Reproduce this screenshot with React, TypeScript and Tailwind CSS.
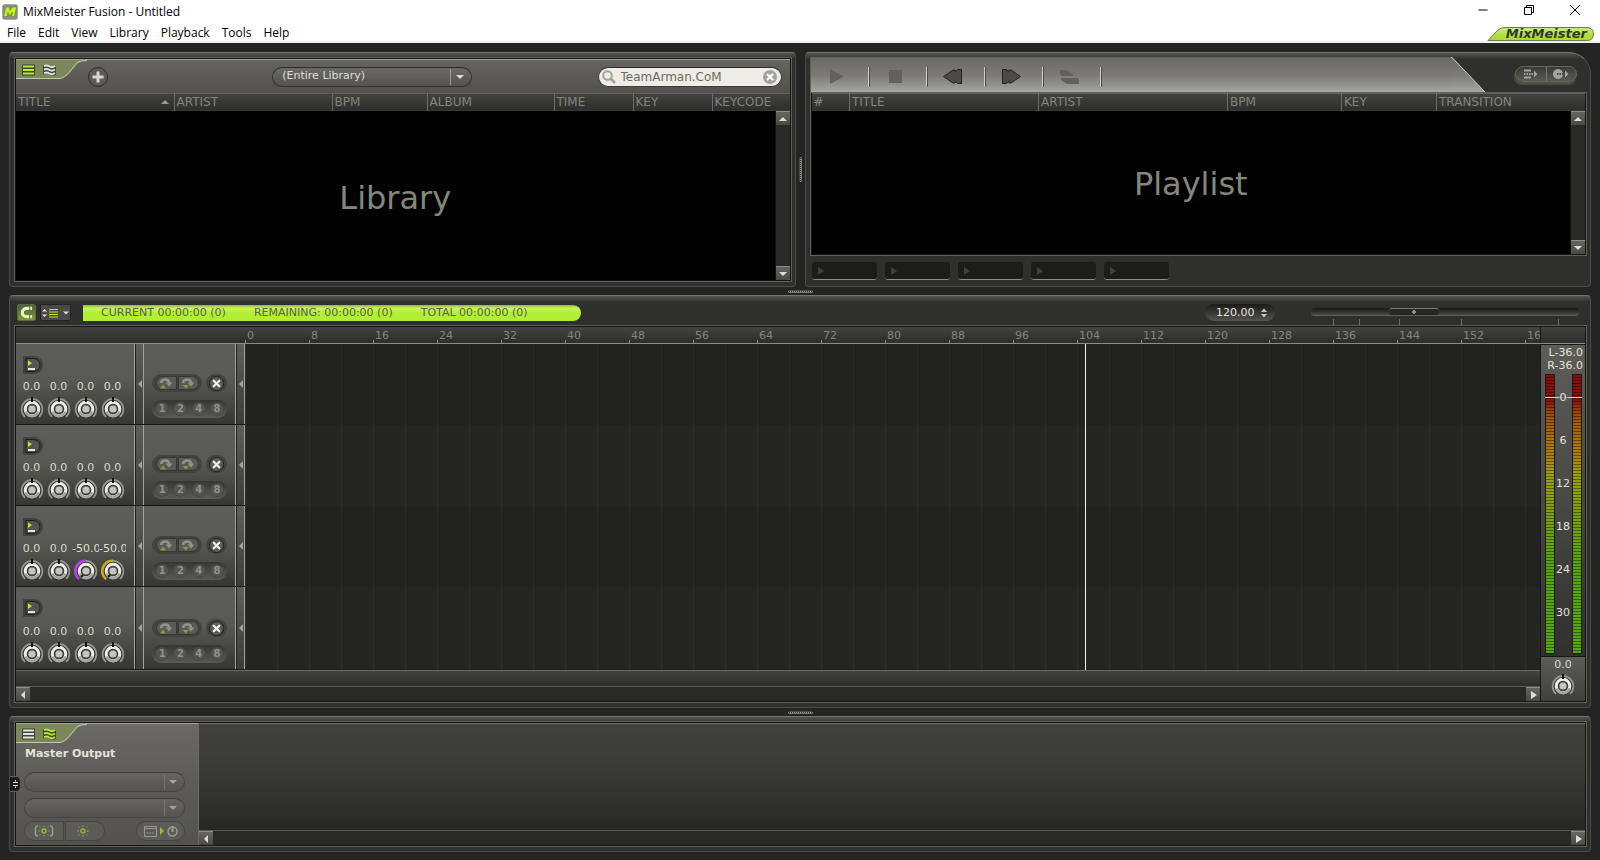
import React, { useState } from "react";
import { Minus, X } from "lucide-react";

const libraryColumns = [
  { label: "TITLE", width: "w-[158px]", sorted: true },
  { label: "ARTIST", width: "w-[158px]" },
  { label: "BPM", width: "w-[95px]" },
  { label: "ALBUM", width: "w-[127px]" },
  { label: "TIME", width: "w-[79px]" },
  { label: "KEY", width: "w-[79px]" },
  { label: "KEYCODE", width: "w-auto" },
];

const playlistColumns = [
  { label: "#", width: "w-[38px]" },
  { label: "TITLE", width: "w-[189px]" },
  { label: "ARTIST", width: "w-[189px]" },
  { label: "BPM", width: "w-[114px]" },
  { label: "KEY", width: "w-[95px]" },
  { label: "TRANSITION", width: "w-auto" },
];

const tracks = [
  { id: 1, values: ["0.0", "0.0", "0.0", "0.0"] },
  { id: 2, values: ["0.0", "0.0", "0.0", "0.0"] },
  { id: 3, values: ["0.0", "0.0", "-50.0", "-50.0"] },
  { id: 4, values: ["0.0", "0.0", "0.0", "0.0"] },
];

const knobNames = ["Volume", "Bass", "Mid", "Treble"];
const arcColors = ["", "", "#b93cf0", "#c9ab0c"];
const beats = Array.from({ length: 21 }, (_, i) => i * 8);
const menuItems = ["File", "Edit", "View", "Library", "Playback", "Tools", "Help"];

type Column = { label: string; width: string; sorted?: boolean };
type Direction = "up" | "down" | "left" | "right";

const arrowPaths: Record<Direction, string> = {
  up: "M0 6 L4 2 L8 6 Z",
  down: "M0 2 L8 2 L4 6 Z",
  left: "M6 0 L6 8 L2 4 Z",
  right: "M2 0 L8 4 L2 8 Z",
};

const Arrow = ({ dir, className = "text-[#deded8]" }: { dir: Direction; className?: string }) => (
  <svg viewBox="0 0 8 8" className={`h-2 w-2 shrink-0 fill-current ${className}`} aria-hidden="true">
    <path d={arrowPaths[dir]} />
  </svg>
);

const ScrollButton = ({ dir }: { dir: Direction }) => (
  <button
    aria-label={`Scroll ${dir}`}
    className="flex h-[14px] w-[14px] shrink-0 items-center justify-center border-t border-[#8d8d88] bg-linear-to-b from-[#66655f] to-[#4a4946]"
  >
    <Arrow dir={dir} />
  </button>
);

const VerticalScroll = () => (
  <div className="flex w-[15px] flex-col items-end justify-between border-l border-[#111110] bg-[#292927]">
    <ScrollButton dir="up" />
    <ScrollButton dir="down" />
  </div>
);

const HorizontalScroll = () => (
  <div className="flex h-[14px] items-center justify-between bg-[#292927]">
    <ScrollButton dir="left" />
    <ScrollButton dir="right" />
  </div>
);

const ColumnHeads = ({ columns }: { columns: Column[] }) => (
  <table className="h-[18px] w-full table-fixed border-collapse bg-linear-to-b from-[#42423f] to-[#2d2d2b] text-[12px] leading-[14px] text-[#83857a]">
    <thead>
      <tr className="border-t border-[#62625e]">
        {columns.map((col, i) => (
          <th
            key={col.label}
            scope="col"
            className={`${col.width} p-0 pb-[2px] pl-[2px] text-left align-middle font-normal ${i > 0 ? "border-l border-[#6c6c68]" : ""}`}
          >
            <span className="flex items-center justify-between">
              {col.label}
              {col.sorted && <Arrow dir="up" className="mr-[5px] text-[#9a9a92]" />}
            </span>
          </th>
        ))}
      </tr>
    </thead>
  </table>
);

const ViewTabs = ({ active }: { active: "list" | "wave" }) => (
  <div className="relative h-5 w-[84px] shrink-0">
    <svg viewBox="0 0 84 20" className="absolute inset-0 h-5 w-[84px]" aria-hidden="true">
      <path d="M0 0 H68 C61 1 54 18 45 18.500 H0 Z" fill="#7c875c" />
      <path d="M0 18.500 H43 C51 18.500 56 7 62 2 Q65 0.500 71 0.500" fill="none" stroke="#c4c6b4" strokeWidth="1" />
    </svg>
    <div className="relative flex gap-2 pt-1 pl-[6px]">
      <button aria-label="List view">
        <svg viewBox="0 0 13 12" className={`h-3 w-[13px] ${active === "list" ? "stroke-[#b5ea2e]" : "stroke-[#e3e3e0]"}`}>
          <rect x="0" y="0.5" width="13" height="11" fill="#3f4136" stroke="none" />
          <path d="M1 2.5 H12 M1 6 H12 M1 9.5 H12" strokeWidth="2" />
        </svg>
      </button>
      <button aria-label="Wave view">
        <svg viewBox="0 0 13 12" className={`h-3 w-[13px] ${active === "wave" ? "stroke-[#b5ea2e]" : "stroke-[#e3e3e0]"}`} fill="none">
          <path d="M0 1.500 Q3 0 6.500 2 T13 2 V11 Q9 12 6.500 10.500 T0 10.500 Z" fill="#3f4136" stroke="none" />
          <path d="M1 2 Q4 1 6.500 2.500 T12 2 M1 5.500 Q4 4.500 6.500 6 T12 5.500 M1 9 Q4 8 6.500 9.500 T12 9" strokeWidth="2" />
        </svg>
      </button>
    </div>
  </div>
);

const Knob = ({ label, arc }: { label: string; arc?: string }) => (
  <button aria-label={label} className="h-[22px] w-6">
    <svg viewBox="0 0 24 22" className="h-[22px] w-6" fill="none">
      <circle cx="12" cy="12" r="9" fill="#33332f" />
      <path d="M5 20 A10.400 10.400 0 1 1 19 20" stroke="#97988d" strokeWidth="1.600" />
      <circle cx="12" cy="12" r="6.800" stroke="#ececea" strokeWidth="3" />
      <path d="M5.500 14.500 A7 7 0 0 0 18.500 14.500" stroke="#a5a5a1" strokeWidth="3" />
      <circle cx="12" cy="12" r="4.800" fill="#454542" />
      <circle cx="12" cy="12" r="3.600" fill="#c4c4c0" />
      {arc ? (
        <>
          <path d="M5 20 A10.400 10.400 0 0 1 12 1.600" stroke={arc} strokeWidth="2.400" />
          <path d="M7 18 L9 16" stroke="#111" strokeWidth="2" />
        </>
      ) : (
        <path d="M12 0 V5" stroke="#151513" strokeWidth="2" />
      )}
    </svg>
  </button>
);

const CollapseStrip = () => (
  <button
    aria-label="Collapse section"
    className="flex w-[9px] items-center justify-center border-r border-l border-[#22221f] border-r-[#a3a39b] bg-linear-to-b from-[#5d5d59] to-[#3c3c39]"
  >
    <Arrow dir="left" className="text-[#a3a39b]" />
  </button>
);

const LoopIcon = ({ dir }: { dir: Direction }) => (
  <svg viewBox="0 0 14 12" className="h-3 w-[14px]" fill="none">
    <path d="M2 6 Q2.500 2.500 6.500 2.500 Q10 2.500 10 6" stroke="#92928b" strokeWidth="2.600" />
    <path d="M6.500 5.500 H13.500 L10 9.500 Z" fill="#92928b" />
    <path d={dir === "up" ? "M1 11.500 L4 7.500 L7 11.500 Z" : "M1.500 8 H8 L4.750 11.500 Z"} fill="#7fa03c" />
  </svg>
);

const TrackControls = ({ values, last }: { values: string[]; last: boolean }) => (
  <div
    className={`flex border-b border-[#161614] bg-linear-to-b from-[#5d5d59] via-[#595955] via-45% to-[#363634] ${last ? "h-[83px]" : "h-[81px]"}`}
  >
    <div className="flex w-[119px] flex-col border-r border-[#a3a39b] pt-3 pb-[5px] pl-[2px]">
      <button aria-label="Mute track" className="ml-[5px] flex h-[18px] w-[20px] items-center justify-center rounded-r-full bg-[#41413e]">
        <svg viewBox="0 0 16 14" className="h-[14px] w-4">
          <path d="M1 0.500 H8 Q15 1 15 7 Q15 13 8 13.500 H1 Z" fill="#55554f" stroke="#1c1c1a" />
          <path d="M3 2.500 L7 5 L3 8 Z" fill="#b5ee2e" />
          <path d="M3 11 H10" stroke="#e8e8df" strokeWidth="2" />
        </svg>
      </button>
      <div className="mt-auto grid w-[108px] grid-cols-4 text-center text-[11px] leading-[14px] text-[#dcdccb]">
        {values.map((v, i) => (
          <span key={i} className="overflow-hidden whitespace-nowrap">{v}</span>
        ))}
      </div>
      <div className="mt-[3px] grid w-[108px] grid-cols-4 justify-items-center">
        {values.map((v, i) => (
          <Knob key={i} label={knobNames[i]} arc={v === "0.0" ? undefined : arcColors[i]} />
        ))}
      </div>
    </div>
    <CollapseStrip />
    <div className="flex w-[92px] flex-col justify-end gap-2 border-r border-[#a3a39b] pb-[6px] pl-2">
      <div className="flex gap-1">
        <div className="flex h-[18px] w-[50px] items-center justify-center gap-px rounded-full bg-[#42423f]">
          <button aria-label="Loop start" className="flex h-[14px] w-[21px] items-center justify-center rounded-l-full border border-[#363633] bg-[#5a5a55]">
            <LoopIcon dir="up" />
          </button>
          <button aria-label="Loop end" className="flex h-[14px] w-[21px] items-center justify-center rounded-r-full border border-[#363633] bg-[#5a5a55]">
            <LoopIcon dir="down" />
          </button>
        </div>
        <div className="flex h-[18px] w-[21px] items-center justify-center rounded-full bg-[#42423f]">
          <button aria-label="Clear loop" className="flex h-[15px] w-[15px] items-center justify-center rounded-full border border-[#1d1d1b] bg-[#5c5c56]">
            <X className="h-[11px] w-[11px] text-[#f0f0ea]" strokeWidth={5} />
          </button>
        </div>
      </div>
      <div className="flex h-[18px] w-[75px] items-center justify-around rounded-full bg-linear-to-b from-[#363634] to-[#5a5a56] px-px text-[10px] leading-[14px] font-bold text-[#91918a]">
        {[1, 2, 4, 8].map((n) => (
          <button key={n} className="h-[14px] w-[14px] rounded-full border border-[#474744] bg-[#53534f] leading-3">{n}</button>
        ))}
      </div>
    </div>
    <CollapseStrip />
  </div>
);

const MeterBar = () => (
  <div className="h-[280px] w-[10px] border border-[#1a1a18] bg-[repeating-linear-gradient(to_bottom,transparent_0px,transparent_2px,#00000066_2px,#00000066_3px),linear-gradient(to_bottom,#8b0c08_0%,#80140a_9%,#943c06_12%,#a35506_16%,#ac6c08_22%,#ab8410_30%,#9da010_36%,#78a010_52%,#57a510_66%,#55a812_100%)]" />
);

const LevelMeter = () => (
  <div className="flex w-[45px] flex-col border-t border-l border-[#171715]">
    <div className="flex flex-1 flex-col items-center border-b border-[#171715] bg-linear-to-b from-[#5c5c58] via-[#484845] to-[#30302e] pt-px text-[11px] leading-[13px] text-[#e4e4d4]">
      <p className="self-end pr-[2px] whitespace-nowrap">L-36.0</p>
      <p className="self-end pr-[2px] whitespace-nowrap">R-36.0</p>
      <div className="relative mt-[2px] flex gap-[17px]">
        <MeterBar />
        <div className="absolute inset-x-0 top-[23px] h-px bg-linear-to-r from-[#dce86a] from-35% via-transparent via-50% to-[#dce86a] to-65%" />
        <div className="absolute inset-x-0 top-[17px] flex flex-col items-center gap-[30px]">
          {[0, 6, 12, 18, 24, 30].map((n) => (
            <span key={n}>{n}</span>
          ))}
        </div>
        <MeterBar />
      </div>
    </div>
    <div className="flex h-[44px] flex-col items-center bg-linear-to-b from-[#5d5d59] to-[#3f3f3c] pt-px text-[11px] leading-[14px] text-[#dcdccb]">
      <span>0.0</span>
      <div className="mt-[2px]">
        <Knob label="Master volume" />
      </div>
    </div>
  </div>
);

const HorizontalGrip = () => (
  <div className="flex h-2 items-center justify-center">
    <div className="h-[3px] w-[25px] rounded-full border-y border-[#4a4a45] border-b-[#77776f] bg-[repeating-linear-gradient(to_right,#9c9c94_0px,#9c9c94_1px,#333330_1px,#333330_2px)]" />
  </div>
);

const panel =
  "rounded-[4px] border border-[#4b4b48] border-t-[#74736d] bg-[#2f2f2d] bg-[linear-gradient(to_bottom,#55544f_0px,#2f2f2d_6px)] p-1 pr-[3px]";
const inner = "flex flex-col border border-[#5f5f5b] bg-[#141412] p-px";

const LibraryPanel = () => {
  const [query, setQuery] = useState("TeamArman.CoM");
  return (
    <section className={`${panel} flex min-w-0 flex-1 flex-col`}>
      <div className={`${inner} flex-1`}>
        <div className="flex h-[34px] items-center justify-between border-t border-[#a3a29c] bg-linear-to-b from-[#65645e] to-[#52514d] pr-2">
          <div className="flex w-[92px] items-center self-stretch">
            <div className="self-start">
              <ViewTabs active="list" />
            </div>
            <button
              aria-label="Add"
              className="-ml-[12px] flex h-5 w-5 shrink-0 items-center justify-center rounded-full border border-[#2d2d2a] bg-[#5c5b56]"
            >
              <svg viewBox="0 0 12 12" className="h-3 w-3" stroke="#d8d8d2" strokeWidth="3">
                <path d="M6 0.500 V11.500 M0.500 6 H11.500" />
              </svg>
            </button>
          </div>
          <div className="relative ml-[39px] flex h-5 w-[200px] items-center">
            <select
              aria-label="Collection"
              className="h-5 w-full appearance-none rounded-full border border-[#32322f] border-t-[#2b2b29] bg-linear-to-b from-[#6b6a64] to-[#54534f] pl-[9px] text-[11px] text-[#deded6]"
            >
              <option>(Entire Library)</option>
            </select>
            <span className="pointer-events-none absolute top-[2px] right-[21px] h-4 w-px bg-[#9a9a93]" />
            <Arrow dir="down" className="pointer-events-none absolute right-2 text-[#deded8]" />
          </div>
          <div className="flex h-5 w-[184px] items-center rounded-full border border-[#3a3a37] border-t-[#2b2b29] bg-[#edece5] pr-1 pl-[3px]">
            <svg viewBox="0 0 14 14" className="h-[14px] w-[14px] shrink-0" fill="none" stroke="#a2a29c">
              <circle cx="5.500" cy="5.500" r="4.300" strokeWidth="2" />
              <path d="M8.500 8.500 L13 13" strokeWidth="2.500" />
            </svg>
            <input
              aria-label="Search library"
              value={query}
              onChange={(e) => setQuery(e.target.value)}
              className="ml-[5px] h-4 min-w-0 flex-1 bg-transparent text-[12px] leading-4 text-[#6c6b62] outline-none"
            />
            <button
              aria-label="Clear search"
              onClick={() => setQuery("")}
              className="flex h-[14px] w-[14px] items-center justify-center rounded-full bg-[#a2a29c]"
            >
              <X className="h-[10px] w-[10px] text-white" strokeWidth={5} />
            </button>
          </div>
        </div>
        <ColumnHeads columns={libraryColumns} />
        <div className="flex flex-1 bg-black">
          <div className="flex flex-1 items-center justify-center pt-[5px] text-[32px] leading-10 text-[#85877b]">Library</div>
          <VerticalScroll />
        </div>
      </div>
    </section>
  );
};

const toolbarIcons = [
  { name: "Play", icon: <path d="M4 1 L18 8.500 L4 16 Z" fill="#62615c" /> },
  { name: "Stop", icon: <path d="M5 2 H18 V15 H5 Z" fill="#62615c" /> },
  {
    name: "Previous",
    icon: (
      <path d="M1.500 8.500 L11 2 H13 V3.500 L16 1.500 H19.500 V15.500 H16 L13 13.500 V15 H11 Z" fill="#4b4a46" stroke="#22221f" />
    ),
  },
  {
    name: "Next",
    icon: (
      <path d="M20.500 8.500 L11 2 H9 V3.500 L6 1.500 H2.500 V15.500 H6 L9 13.500 V15 H11 Z" fill="#4b4a46" stroke="#22221f" />
    ),
  },
  {
    name: "Swap",
    icon: <path d="M2 2 H8 L15 6 V8 H4 L2 6 Z M3 10 H19 Q21 10 21 12 V16 H9 L3 12 Z" fill="#62615c" />,
  },
];

const PlaylistPanel = () => (
  <section className={`${panel} flex min-w-0 flex-1 flex-col rounded-tr-[22px]`}>
    <div className="flex h-[35px]">
      <div className="flex min-w-0 flex-1">
        <div className="flex min-w-0 flex-1 items-center border-t border-l border-[#5f5f5b] bg-linear-to-b from-[#6a6963] via-[#7b7a75] to-[#a6a5a1] pt-[3px]">
          {toolbarIcons.map(({ name, icon }) => (
            <button
              key={name}
              aria-label={name}
              className="flex h-5 w-[58px] items-center justify-center border-r border-[#d2d2ce] pr-1 shadow-[1px_0_0_#4a4a46]"
            >
              <svg viewBox="0 0 22 18" className="h-[18px] w-[22px]">{icon}</svg>
            </button>
          ))}
        </div>
        <svg viewBox="0 0 34 35" className="h-[35px] w-[34px] shrink-0" aria-hidden="true">
          <defs>
            <linearGradient id="steel" x1="0" y1="0" x2="0" y2="1">
              <stop offset="0" stopColor="#6a6963" />
              <stop offset="0.5" stopColor="#7b7a75" />
              <stop offset="1" stopColor="#a6a5a1" />
            </linearGradient>
          </defs>
          <path d="M0 0 H1 L34 35 H0 Z" fill="url(#steel)" />
          <path d="M0 0.500 H1 L34 35" fill="none" stroke="#c9c9c4" />
        </svg>
      </div>
      <div className="flex w-[102px] items-start justify-center pt-[9px] pl-[20px]">
        <div className="flex h-4 w-[62px] items-center rounded-full border border-[#66684f] bg-linear-to-b from-[#3a3a37] to-[#5a5a55] shadow-[-1px_3px_2px_#50504c]">
          <button aria-label="Send to playlist" className="flex h-full flex-1 items-center justify-center border-r border-[#77776f]">
            <svg viewBox="0 0 14 10" className="h-[10px] w-[14px]" stroke="#a4a49d" strokeWidth="2">
              <path d="M0 1.500 H7 M0 8.500 H7" />
              <path d="M0 5 H10" strokeDasharray="1.500 1" />
              <path d="M10 1.500 L13.500 5 L10 8.500 Z" fill="#a4a49d" stroke="none" />
            </svg>
          </button>
          <button aria-label="Record" className="flex h-full flex-1 items-center justify-center">
            <svg viewBox="0 0 16 10" className="h-[10px] w-4">
              <circle cx="5" cy="5" r="5" fill="#a4a49d" />
              <path d="M4 5 H12" stroke="#4a4a46" strokeWidth="2" strokeDasharray="1.500 1" />
              <path d="M12 1.500 L15.500 5 L12 8.500 Z" fill="#a4a49d" />
            </svg>
          </button>
        </div>
      </div>
    </div>
    <div className={`${inner} min-h-0 flex-1 pt-0`}>
      <ColumnHeads columns={playlistColumns} />
      <div className="flex flex-1 bg-black">
        <div className="flex flex-1 items-center justify-center pt-[3px] text-[32px] leading-10 text-[#85877b]">Playlist</div>
        <VerticalScroll />
      </div>
    </div>
    <div className="flex gap-2 pt-[6px] pb-[2px] pl-[2px]">
      {[1, 2, 3, 4, 5].map((n) => (
        <button
          key={n}
          aria-label={`Preset ${n}`}
          className="flex h-[18px] w-[65px] items-center rounded-[3px] border-b border-[#8e8e88] bg-[#1c1c1a] pl-1"
        >
          <Arrow dir="right" className="text-[#40403d]" />
        </button>
      ))}
    </div>
  </section>
);

const zoomTicks = ["w-[26px]", "w-[40px]", "w-[62px]", "w-[97px]", "w-px"];

const Timeline = () => (
  <section className={`${panel} flex flex-col`}>
    <div className="flex h-[25px] items-center justify-between">
      <div className="flex items-center pl-[3px]">
        <button
          aria-label="Snap to grid"
          className="flex h-[17px] w-[19px] items-center justify-center rounded-[2px] border border-[#5b6a36] bg-linear-to-b from-[#55584a] to-[#7b9c32]"
        >
          <svg viewBox="0 0 14 14" className="h-[13px] w-[13px]" fill="none">
            <path d="M13 2.500 H7 A4.500 4.500 0 0 0 7 11.500 H13" stroke="#e3f7b4" strokeWidth="3.500" />
            <path d="M10.500 0.500 V5 M10.500 9 V14" stroke="#4c5a2c" />
          </svg>
        </button>
        <button
          aria-label="Track view options"
          className="ml-1 flex h-[17px] w-[31px] items-center justify-center gap-[2px] rounded-[2px] border border-[#232321] bg-[#4a4946]"
        >
          <svg viewBox="0 0 5 10" className="h-[10px] w-[5px] fill-[#deded8]">
            <path d="M0 3.500 L2.500 1 L5 3.500 Z M0 6.500 H5 L2.500 9 Z" />
          </svg>
          <svg viewBox="0 0 9 10" className="h-[10px] w-[9px] stroke-[#b5ea2e]">
            <path d="M0 1.500 H9 M0 4 H9 M0 6.500 H9 M0 9 H9" />
          </svg>
          <svg viewBox="0 0 6 4" className="ml-[3px] h-1 w-[6px] fill-[#deded8]">
            <path d="M0 0.500 H6 L3 3.500 Z" />
          </svg>
        </button>
        <div className="ml-3 flex h-4 w-[498px] items-center gap-7 rounded-r-full bg-linear-to-b from-[#8fb83c] via-[#c9f55c] via-20% to-[#b2ee34] to-50% pl-[18px] text-[11px] leading-[14px] text-[#5c5f48]">
          <span>CURRENT 00:00:00 (0)</span>
          <span>REMAINING: 00:00:00 (0)</span>
          <span>TOTAL 00:00:00 (0)</span>
        </div>
      </div>
      <div className="flex items-start gap-9 self-start pr-2">
        <div className="mt-1 flex h-[17px] w-[70px] items-center rounded-full bg-linear-to-b from-[#1b1b19] to-[#55544f] px-[11px]">
          <input
            aria-label="Tempo"
            defaultValue="120.00"
            className="h-4 w-[45px] bg-transparent text-[11px] leading-4 text-[#e4e4dc] outline-none"
          />
          <svg viewBox="0 0 6 10" className="h-[10px] w-[6px] shrink-0 fill-[#c8c8c2]">
            <path d="M0 4 L3 0.500 L6 4 Z M0 6 H6 L3 9.500 Z" />
          </svg>
        </div>
        <div className="flex w-[268px] flex-col pt-2">
          <input
            type="range"
            aria-label="Timeline zoom"
            defaultValue={36}
            className="h-2 w-full appearance-none rounded-full border-b border-[#5d5d59] bg-linear-to-b from-[#181816] to-[#494946] [&::-webkit-slider-thumb]:h-[7px] [&::-webkit-slider-thumb]:w-[50px] [&::-webkit-slider-thumb]:appearance-none [&::-webkit-slider-thumb]:rounded-[3px] [&::-webkit-slider-thumb]:border-t [&::-webkit-slider-thumb]:border-[#77776f] [&::-webkit-slider-thumb]:bg-[radial-gradient(circle,#8f8f88_0px,#8f8f88_2px,#262624_2px)]"
          />
          <div className="mt-[3px] flex h-[6px] pl-[22px]">
            {zoomTicks.map((w) => (
              <div key={w} className={`${w} border-l border-[#6e6e68]`} />
            ))}
          </div>
        </div>
      </div>
    </div>
    <div className={inner}>
      <div className="flex h-[17px] border-b border-[#8c8c86] bg-linear-to-b from-[#42423f] to-[#2d2d2b] text-[11px] leading-[17px] text-[#83857a]">
        <div className="w-[229px] shrink-0" />
        <div className="flex flex-1 overflow-hidden">
          {beats.map((b) => (
            <div
              key={b}
              className="w-16 shrink-0 bg-[linear-gradient(#8c8c86,#8c8c86)] bg-[length:1px_3px] bg-[position:left_bottom] bg-no-repeat pl-[2px]"
            >
              {b}
            </div>
          ))}
        </div>
        <div className="w-[45px] border-l border-[#171715]" />
      </div>
      <div className="flex">
        <div className="flex min-w-0 flex-1 flex-col">
          <div className="relative flex">
            <div className="w-[229px] shrink-0">
              {tracks.map((t) => (
                <TrackControls key={t.id} values={t.values} last={t.id === tracks.length} />
              ))}
            </div>
            <div className="flex-1 bg-[repeating-linear-gradient(to_right,#2c2c2a_0px,#2c2c2a_1px,transparent_1px,transparent_32px),repeating-linear-gradient(to_bottom,#222220_0px,#222220_81px,#252523_81px,#252523_162px)]" />
            {/* playhead */}
            <div className="absolute inset-y-0 left-[1069px] w-px bg-[#f2f2f2]" />
          </div>
          <div className="h-[17px] border-t border-b border-[#6c6c67] border-b-[#5a5a56] bg-linear-to-b from-[#42423f] to-[#2d2d2b]" />
          <HorizontalScroll />
        </div>
        <LevelMeter />
      </div>
    </div>
  </section>
);

const OutputSelect = ({ label }: { label: string }) => (
  <div className="relative flex h-5 w-[161px] items-center">
    <select
      aria-label={label}
      className="h-5 w-full appearance-none rounded-full border border-[#454541] border-t-[#3f3f3b] bg-linear-to-b from-[#66655f] to-[#54534f]"
    />
    <span className="pointer-events-none absolute top-[2px] right-5 h-4 w-px bg-[#77776f]" />
    <Arrow dir="down" className="pointer-events-none absolute right-2 text-[#a3a39b]" />
  </div>
);

const GearIcon = () => (
  <svg viewBox="0 0 12 12" className="h-3 w-3" fill="none" stroke="#8fb83c">
    <circle cx="6" cy="6" r="2" strokeWidth="1.500" />
    <path d="M6 0.500 V2 M6 10 V11.500 M0.500 6 H2 M10 6 H11.500 M1.500 1.500 L2.500 2.500 M9.500 9.500 L10.500 10.500 M10.500 1.500 L9.500 2.500 M2.500 9.500 L1.500 10.500" />
  </svg>
);

const OutputPanel = () => (
  <section className={`${panel} relative flex flex-1 flex-col`}>
    <div className={`${inner} flex-1`}>
      <div className="flex flex-1">
        <div className="w-[182px] shrink-0 border-t border-[#a3a29c] bg-linear-to-b from-[#6a6963] via-[#5c5b56] to-[#53524e]">
          <ViewTabs active="wave" />
          <h2 className="mt-[3px] pl-[9px] text-[11px] leading-[14px] font-bold text-[#e2e2dc]">Master Output</h2>
          <div className="mt-[11px] flex flex-col gap-[6px] pl-2">
            <OutputSelect label="Output effect" />
            <OutputSelect label="Output parameter" />
          </div>
          <div className="mt-[3px] flex h-5 gap-px pl-2">
            <button aria-label="Bypass all effects" className="flex w-[40px] items-center justify-center rounded-l-full border border-[#454541] bg-[#5c5b56]">
              <svg viewBox="0 0 4 12" className="h-3 w-1" fill="none" stroke="#9a9a93" strokeWidth="1.500"><path d="M4 1 Q1.500 1 1.500 3 V9 Q1.500 11 4 11" /></svg>
              <GearIcon />
              <svg viewBox="0 0 4 12" className="h-3 w-1" fill="none" stroke="#9a9a93" strokeWidth="1.500"><path d="M0 1 Q2.500 1 2.500 3 V9 Q2.500 11 0 11" /></svg>
            </button>
            <button aria-label="Bypass effect" className="flex w-[40px] items-center justify-center rounded-r-full border border-[#454541] bg-[#5c5b56] pr-1">
              <GearIcon />
            </button>
            <button aria-label="Open effect window" className="ml-[30px] flex w-[49px] items-center justify-center gap-[3px] rounded-full border border-[#454541] bg-[#5c5b56]">
              <svg viewBox="0 0 13 11" className="h-[11px] w-[13px]" fill="none" stroke="#9a9a93">
                <path d="M0.500 0.500 H12.500 V10.500 H0.500 Z M0.500 2.500 H12.500" />
                <path d="M3 7 H10" strokeDasharray="1.500 1" />
              </svg>
              <svg viewBox="0 0 4 8" className="h-2 w-1 fill-[#8fc22c]"><path d="M0 0 L4 4 L0 8 Z" /></svg>
              <svg viewBox="0 0 11 11" className="h-[11px] w-[11px]" fill="none" stroke="#9a9a93">
                <circle cx="5.500" cy="5.500" r="4.500" strokeWidth="1.500" />
                <path d="M5.500 0 V6" strokeWidth="2" />
              </svg>
            </button>
          </div>
        </div>
        <div className="flex min-w-0 flex-1 flex-col border-t border-l border-[#6c6c67]">
          <div className="flex-1 border-b border-[#5a5a56] bg-linear-to-b from-[#43423d] via-[#383835] to-[#272726]" />
          <HorizontalScroll />
        </div>
      </div>
    </div>
    <button
      aria-label="Resize output panel"
      className="absolute top-[59px] left-0 flex h-4 w-[11px] items-center justify-center rounded-r-[5px] border border-l-0 border-[#5f5f5b] bg-[#1c1c1a]"
    >
      <svg viewBox="0 0 5 8" className="h-2 w-[5px]" fill="none" stroke="#e4e4e0">
        <path d="M0 2.500 H5 M0 5.500 H5 M2.500 0 V1.500 M2.500 6.500 V8" />
      </svg>
    </button>
  </section>
);

const TitleBar = () => (
  <header className="border-b-2 border-[#f0f0f0] bg-white font-['Open_Sans',sans-serif] text-[12px] text-black">
    <div className="flex h-[23px] items-start justify-between">
      <div className="flex h-6 items-center gap-[5px] pl-[2px]">
        <svg viewBox="0 0 16 16" className="h-4 w-4" aria-hidden="true">
          <rect x="0.500" y="0.500" width="15" height="15" rx="2" fill="#8b8b87" stroke="#a9a9a5" />
          <path d="M1.500 12.500 L4 3 H7.500 L8 6.500 L10.500 3 H14.500 L12.500 12.500 H9.500 L10.500 8 L8 11 H6.500 L6 8 L5 12.500 Z" fill="#c0f51e" stroke="#5b7a14" strokeWidth="0.500" />
        </svg>
        <h1 className="leading-4">MixMeister Fusion - Untitled</h1>
      </div>
      <div className="flex h-5 items-center pr-[2px]">
        <button aria-label="Minimize" className="flex w-[46px] justify-center">
          <Minus className="h-[14px] w-[14px]" strokeWidth={2} />
        </button>
        <button aria-label="Restore" className="flex w-[46px] justify-center">
          <svg viewBox="0 0 10 10" className="h-[10px] w-[10px]" fill="none" stroke="#000">
            <path d="M0.500 2.500 H7.500 V9.500 H0.500 Z M2.500 2.500 V0.500 H9.500 V7.500 H7.500" />
          </svg>
        </button>
        <button aria-label="Close" className="flex w-[46px] justify-center">
          <svg viewBox="0 0 10 10" className="h-[10px] w-[10px]" stroke="#000"><path d="M0 0 L10 10 M10 0 L0 10" /></svg>
        </button>
      </div>
    </div>
    <div className="flex h-[18px] items-end justify-between pr-[6px]">
      <nav className="flex h-[18px] items-center gap-3 pt-[2px] pl-[7px]">
        {menuItems.map((item) => (
          <button key={item} className="leading-4">{item}</button>
        ))}
      </nav>
      <div className="relative flex h-[14px] w-[107px] items-center justify-end pr-[7px]">
        <svg viewBox="0 0 107 14" className="absolute inset-0 h-[14px] w-[107px]" aria-hidden="true">
          <defs>
            <linearGradient id="brand" x1="0" y1="0" x2="0" y2="1">
              <stop offset="0" stopColor="#cdeb8c" />
              <stop offset="0.6" stopColor="#aee23a" />
              <stop offset="1" stopColor="#a5dc2c" />
            </linearGradient>
          </defs>
          <path d="M1 13.500 L11 3 Q14 0.500 18 0.500 H100 Q106.500 1 106.500 7 Q106.500 13.500 100 13.500 Z" fill="url(#brand)" stroke="#6d7a4a" />
        </svg>
        <span className="relative font-['DejaVu_Sans',sans-serif] text-[13px] leading-[14px] font-bold text-[#34382a] italic">MixMeister</span>
      </div>
    </div>
  </header>
);

const App: React.FC = () => {
  return (
    <div className="flex min-h-screen flex-col bg-[#242424] font-['DejaVu_Sans',Verdana,sans-serif]">
      <TitleBar />
      <main className="flex flex-1 flex-col px-[9px] pt-[9px] pb-2">
        <div className="flex h-[235px]">
          <LibraryPanel />
          <div className="flex w-[9px] shrink-0 items-center justify-center">
            <div className="h-[25px] w-[3px] rounded-full border-x border-[#4a4a45] border-r-[#77776f] bg-[repeating-linear-gradient(to_bottom,#9c9c94_0px,#9c9c94_1px,#333330_1px,#333330_2px)]" />
          </div>
          <PlaylistPanel />
        </div>
        <HorizontalGrip />
        <Timeline />
        <HorizontalGrip />
        <OutputPanel />
      </main>
    </div>
  );
};

export default App;
